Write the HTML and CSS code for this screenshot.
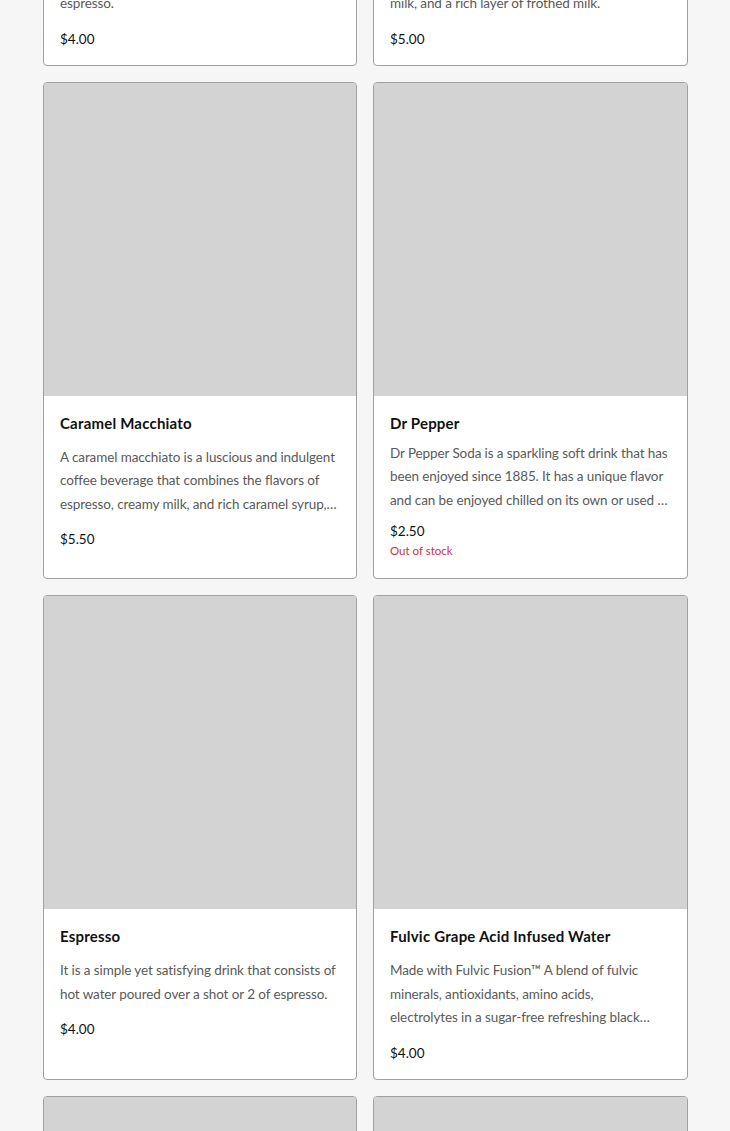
FILE: index.html
```html
<!DOCTYPE html>
<html lang="en">
<head>
    <meta charset="UTF-8">
    <meta name="viewport" content="width=device-width, initial-scale=1.0">
    <title>Menu</title>
    <link rel="stylesheet" href="styles.css">
</head>
<body>
    <div class="container">
        <div class="product-grid">
            <div class="product-card">
                <div class="product-image"></div>
                <div class="product-body">
                    <h3 class="product-name">Americano</h3>
                    <p class="product-desc">An americano is a bold and smooth coffee drink made by adding hot water to a shot of<br>espresso.</p>
                    <div class="product-price">$4.00</div>
                </div>
            </div>
            <div class="product-card">
                <div class="product-image"></div>
                <div class="product-body">
                    <h3 class="product-name">Cappuccino</h3>
                    <p class="product-desc">A cappuccino is a classic Italian coffee drink made with equal parts of espresso, steamed<br>milk, and a rich layer of frothed milk.</p>
                    <div class="product-price">$5.00</div>
                </div>
            </div>
            <div class="product-card">
                <div class="product-image"></div>
                <div class="product-body">
                    <h3 class="product-name">Caramel Macchiato</h3>
                    <p class="product-desc">A caramel macchiato is a luscious and indulgent coffee beverage that combines the flavors of espresso, creamy milk, and rich caramel syrup, topped with a drizzle of caramel sauce.</p>
                    <div class="product-price">$5.50</div>
                </div>
            </div>
            <div class="product-card sold-out">
                <div class="product-image"></div>
                <div class="product-body">
                    <h3 class="product-name">Dr Pepper</h3>
                    <p class="product-desc">Dr Pepper Soda is a sparkling soft drink that has been enjoyed since 1885. It has a unique flavor and can be enjoyed chilled on its own or used as a mixer in your favorite drinks.</p>
                    <div class="product-price">$2.50</div>
                    <div class="stock-note">Out of stock</div>
                </div>
            </div>
            <div class="product-card">
                <div class="product-image"></div>
                <div class="product-body">
                    <h3 class="product-name">Espresso</h3>
                    <p class="product-desc">It is a simple yet satisfying drink that consists of hot water poured over a shot or 2 of espresso.</p>
                    <div class="product-price">$4.00</div>
                </div>
            </div>
            <div class="product-card">
                <div class="product-image"></div>
                <div class="product-body">
                    <h3 class="product-name">Fulvic Grape Acid Infused Water</h3>
                    <p class="product-desc">Made with Fulvic Fusion™ A blend of fulvic minerals, antioxidants, amino acids,<br>electrolytes in a sugar-free refreshing black grape flavored water.</p>
                    <div class="product-price">$4.00</div>
                </div>
            </div>
            <div class="product-card">
                <div class="product-image"></div>
                <div class="product-body">
                    <h3 class="product-name">Green Tea</h3>
                    <p class="product-desc">A light and refreshing tea.</p>
                    <div class="product-price">$3.00</div>
                </div>
            </div>
            <div class="product-card">
                <div class="product-image"></div>
                <div class="product-body">
                    <h3 class="product-name">Hot Chocolate</h3>
                    <p class="product-desc">Rich cocoa with steamed milk.</p>
                    <div class="product-price">$4.50</div>
                </div>
            </div>
        </div>
    </div>
</body>
</html>
```

FILE: styles.css
```css
body {
    font-family: 'Lato', 'Liberation Sans', sans-serif;
    background-color: #f6f6f6;
    margin: 0;
    padding: 0;
}
.container {
    padding: 0 42px 0 43px;
    overflow: hidden;
}
.product-grid {
    display: grid;
    grid-template-columns: 314px 315px;
    gap: 16px;
    margin-top: -419px;
}
.product-card {
    background-color: #ffffff;
    border: 1px solid #a0a0a0;
    border-radius: 4px;
    overflow: hidden;
}
.product-image {
    height: 313px;
    background-color: #d3d3d3;
}
.product-body {
    padding: 16px;
}
.product-name {
    font-size: 15px;
    font-weight: 700;
    line-height: 22px;
    color: #111;
    margin: 0;
    letter-spacing: 0.2px;
}
.product-desc {
    font-size: 13.5px;
    line-height: 23.5px;
    letter-spacing: -0.1px;
    color: #5a5a5a;
    margin: 12px 0 0;
    display: -webkit-box;
    -webkit-line-clamp: 3;
    -webkit-box-orient: vertical;
    overflow: hidden;
}
.product-price {
    font-size: 13.5px;
    line-height: 20px;
    color: #111;
    margin-top: 13px;
}
.sold-out .product-desc {
    margin-top: 8px;
}
.sold-out .product-price {
    margin-top: 9px;
}
.stock-note {
    font-size: 11.5px;
    line-height: 18px;
    color: #d0323c;
    margin-top: 1px;
    padding-bottom: 2px;
}
```
